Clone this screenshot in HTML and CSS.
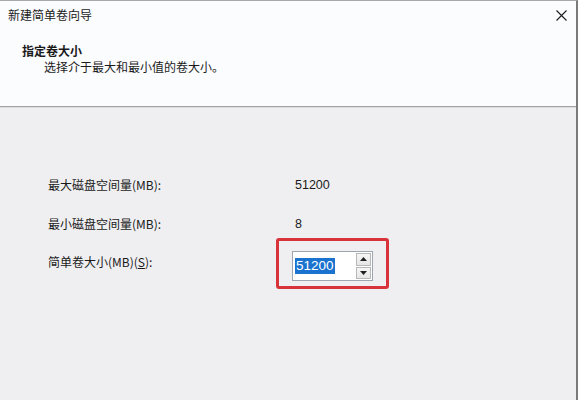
FILE: index.html
```html
<!DOCTYPE html>
<html lang="zh-CN">
<head>
<meta charset="utf-8">
<title>新建简单卷向导</title>
<link rel="stylesheet" href="styles.css">
</head>
<body>
<div class="window">
  <div class="header">
    <div class="titlebar">
      <span class="title">新建简单卷向导</span>
      <svg class="close" width="11" height="11" viewBox="0 0 11 11"><path d="M0.5 0.5 L10.5 10.5 M10.5 0.5 L0.5 10.5" stroke="#1a1a1a" stroke-width="1.1" fill="none"/></svg>
    </div>
    <div class="heading">指定卷大小</div>
    <div class="subheading">选择介于最大和最小值的卷大小。</div>
  </div>
  <div class="content">
    <div class="form">
      <div class="label">最大磁盘空间量(MB):</div>
      <div class="value">51200</div>
      <div class="label">最小磁盘空间量(MB):</div>
      <div class="value">8</div>
      <div class="label label-spin">简单卷大小(MB)(<u>S</u>):</div>
      <div class="value value-spin">
        <div class="spin">
          <div class="field"><span class="sel">51200</span></div>
          <div class="btns">
            <div class="btn"><svg width="7" height="4" viewBox="0 0 7 4"><path d="M3.5 0 L7 4 L0 4 Z" fill="#202020"/></svg></div>
            <div class="btn"><svg width="7" height="4" viewBox="0 0 7 4"><path d="M0 0 L7 0 L3.5 4 Z" fill="#202020"/></svg></div>
          </div>
          <div class="highlight"></div>
        </div>
      </div>
    </div>
  </div>
</div>
</body>
</html>
```

FILE: styles.css
```css
* { box-sizing: border-box; }
html, body {
  margin: 0;
  padding: 0;
  width: 578px;
  height: 400px;
  overflow: hidden;
  background: #efeff1;
  font-family: "Noto Sans CJK SC", "Microsoft YaHei", sans-serif;
  font-size: 12px;
  color: #1a1a1a;
}
.window {
  width: 578px;
  height: 400px;
  border-top: 1px solid #a8a8a8;
  border-right: 2px solid #7a7a7a;
  display: flex;
  flex-direction: column;
}
.header {
  height: 106px;
  background: #fbfcfe;
  border-bottom: 1px solid #a3a3a5;
  box-shadow: 0 1px 0 #dcdcde;
}
.titlebar {
  height: 29px;
  display: flex;
  align-items: center;
  justify-content: space-between;
  padding: 0 9px 0 8px;
}
.title {
  line-height: 16px;
  margin-top: -1px;
}
.close {
  margin-top: -1px;
}
.heading {
  margin-top: 13px;
  padding-left: 22px;
  font-weight: bold;
  line-height: 16px;
}
.subheading {
  padding-left: 44px;
  line-height: 16px;
}
.content {
  flex: 1;
  padding: 70px 0 0 48px;
}
.form {
  display: grid;
  grid-template-columns: 247px auto;
  row-gap: 23px;
  align-items: center;
  line-height: 16px;
}
.value {
  font-family: "Liberation Sans", "Noto Sans", sans-serif;
  font-size: 12.5px;
}
.label-spin, .value-spin { margin-top: -4px; }
.label-spin { margin-bottom: 8px; }
.spin {
  position: relative;
  width: 81px;
  height: 30px;
  margin-left: -3px;
  border: 1px solid #9ea7b0;
  background: #ffffff;
  display: flex;
  padding: 1px 1px 1px 2px;
}
.field {
  flex: 1;
  display: flex;
  align-items: center;
}
.sel {
  background: #1a73cf;
  color: #ffffff;
  font-size: 13.5px;
  line-height: 16px;
  padding: 0 1px;
}
.btns {
  width: 15px;
  display: flex;
  flex-direction: column;
  gap: 1px;
}
.btn {
  flex: 1;
  border: 1px solid #b8b8b8;
  background: linear-gradient(#f6f6f6, #e6e6e6);
  display: flex;
  align-items: center;
  justify-content: center;
}
.highlight {
  position: absolute;
  left: -17px;
  top: -14px;
  right: -17px;
  bottom: -9px;
  border: 3px solid #d8333a;
  border-radius: 3px;
}
```
